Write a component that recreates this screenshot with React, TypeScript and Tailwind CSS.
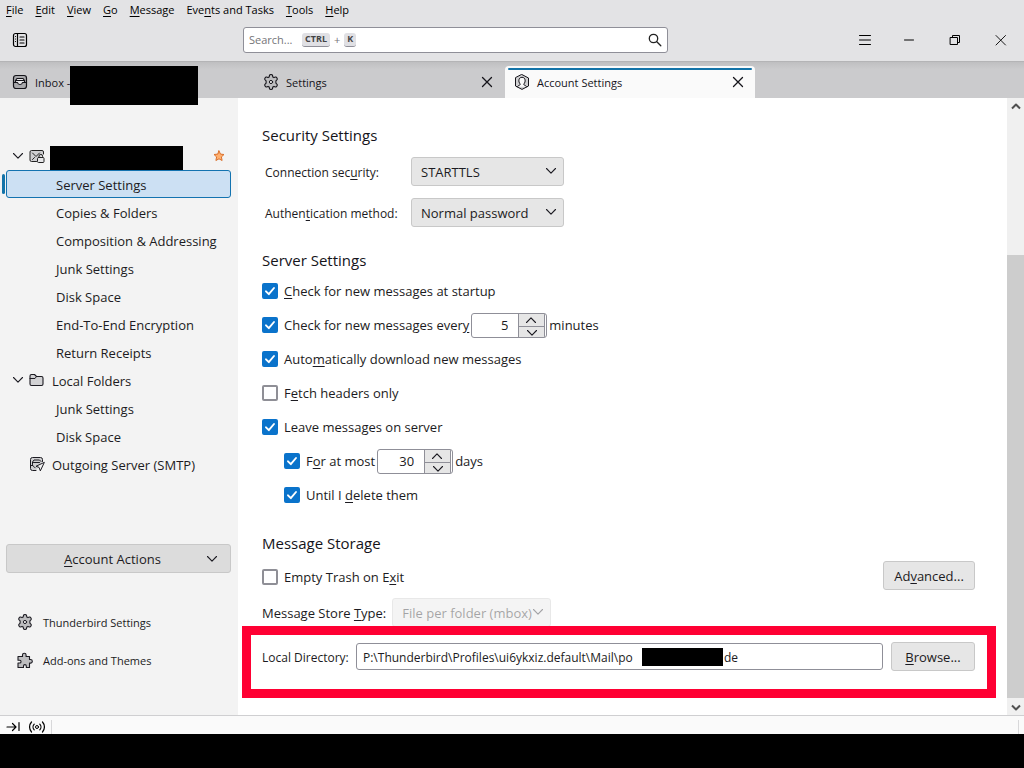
import { useState } from 'react';

// Text with one underlined access-key letter.
function Accel({ text, at }: { text: string; at: number }) {
  return (
    <span className="whitespace-pre">
      {text.slice(0, at)}
      <u className="underline-offset-2">{text[at]}</u>
      {text.slice(at + 1)}
    </span>
  );
}

function Icon({
  children,
  className = 'h-4 w-4',
  box = '0 0 16 16',
}: {
  children: React.ReactNode;
  className?: string;
  box?: string;
}) {
  return (
    <svg
      viewBox={box}
      className={`shrink-0 ${className}`}
      fill="none"
      stroke="currentColor"
      strokeLinecap="round"
      strokeLinejoin="round"
      aria-hidden="true"
    >
      {children}
    </svg>
  );
}

function ChevronDown({ className = 'h-3 w-3' }: { className?: string }) {
  return (
    <Icon box="0 0 12 12" className={className}>
      <path d="M1.5 3.5 6 8.2l4.5-4.7" strokeWidth="1.1" />
    </Icon>
  );
}

function CloseIcon() {
  return (
    <Icon>
      <path d="m3.5 3.5 9 9m0-9-9 9" strokeWidth="1.3" />
    </Icon>
  );
}

function GearIcon() {
  return (
    <Icon>
      <path
        d="M6.5 1.3c.2-1 2.8-1 3 0l.3 1.6 1.2.7 1.6-.5c.9-.3 2.200 1.900 1.500 2.600L12.900 6.800v2.400l1.200 1.100c.7.700-.600 2.900-1.500 2.600l-1.600-.5-1.200.7-.3 1.600c-.2 1-2.800 1-3 0l-.3-1.600-1.200-.7-1.600.5c-.9.3-2.200-1.900-1.500-2.600l1.200-1.100V6.800L1.900 5.700C1.200 5 2.500 2.800 3.400 3.100l1.600.5 1.200-.7z"
        fill="#bdbdbf"
        strokeWidth="1.1"
      />
      <circle cx="8" cy="8" r="1.6" fill="#f3f3f3" />
    </Icon>
  );
}

function PuzzleIcon() {
  return (
    <Icon>
      <path
        d="M5.500 4.500V3a1.800 1.800 0 0 1 3.600 0v1.500h3.400v3h1a1.800 1.800 0 0 1 0 3.600h-1v4.400H9.300V14a1.400 1.400 0 0 0-2.800 0v1.500H1V11h1.700a1.300 1.300 0 0 0 0-2.700H1V4.500z"
        fill="#bdbdbf"
        strokeWidth="1.1"
      />
    </Icon>
  );
}

function InboxIcon() {
  return (
    <Icon>
      <rect x="1.5" y="1.5" width="13" height="13" rx="2.5" fill="#a9a9ac" strokeWidth="1.2" />
      <path d="M3.500 8.500v-2l1.500-2h6l1.500 2v2h-2c-.3 1.600-1 2-2.500 2s-2.200-.4-2.500-2zM4.500 6.500h7" fill="#e8e8ea" strokeWidth="1.2" />
      <path d="M1.500 8.500h2M12.500 8.500h2" strokeWidth="1.2" />
    </Icon>
  );
}

function AccountIcon() {
  return (
    <Icon>
      <path d="M8 .6 14.500 4v8L8 15.400 1.500 12V4z" fill="#d0d0d2" />
      <path
        d="M3.500 12.800c.4-1 1.200-1.500 2.300-1.800.6-.2.5-.8.2-1.200C4.300 8 4.200 3.300 8 3.300s3.700 4.700 2 6.500c-.3.400-.4 1 .2 1.200 1.100.3 1.900.8 2.300 1.800"
        fill="#fafafa"
      />
    </Icon>
  );
}

function SecureMailIcon() {
  return (
    <Icon>
      <path d="M7.500 13.500h-5a1.500 1.500 0 0 1-1.500-1.500V4a1.500 1.500 0 0 1 1.500-1.500h10.500A1.500 1.500 0 0 1 14.500 4v2" fill="#cfcfd1" />
      <path d="m3.500 5 3.500 3.500L10.500 5M3.500 11.500l2-2" />
      <rect x="8.500" y="9.500" width="6.500" height="5" rx="1" fill="#e6e6e8" />
      <path d="M10 9.500V8.200a1.800 1.800 0 0 1 3.600 0v1.300" />
    </Icon>
  );
}

function FolderIcon() {
  return (
    <Icon>
      <path
        d="M1 4c0-1 .5-1.500 1.500-1.500h3L7.500 4.500h5c1 0 1.500.5 1.500 1.500v6c0 1-.5 1.500-1.500 1.500h-10C1.500 13.500 1 13 1 12z"
        fill="#d2d2d4"
        strokeWidth="1.1"
      />
      <path d="M1 6.500h5l1.500-2" />
    </Icon>
  );
}

function OutgoingIcon() {
  return (
    <Icon>
      <path d="M7 14.500H3.500a2 2 0 0 1-2-2v-9a2 2 0 0 1 2-2h8a2 2 0 0 1 2 2v2" fill="#cfcfd1" />
      <path d="M3.500 8.500V6L5 4h5.500L12 5.500M4.500 6.500h6M1.500 9.500h2.500c.3 1 .8 1.700 2 2" />
      <path d="m15 6.500-8 3.800 3 1 1.200 3.200z" fill="#f3f3f3" />
    </Icon>
  );
}

function TitleBar() {
  const menus = [
    { text: 'File', at: 0 },
    { text: 'Edit', at: 0 },
    { text: 'View', at: 0 },
    { text: 'Go', at: 0 },
    { text: 'Message', at: 0 },
    { text: 'Events and Tasks', at: 3 },
    { text: 'Tools', at: 0 },
    { text: 'Help', at: 0 },
  ];
  return (
    <header className="bg-[#e3e3e5] text-[11px] text-black">
      <nav className="flex h-5 items-center gap-3 pl-1.5">
        {menus.map((menu) => (
          <button key={menu.text} type="button">
            <Accel {...menu} />
          </button>
        ))}
      </nav>
      <div className="flex h-[41px] items-center pb-0.5">
        <button type="button" aria-label="Spaces toolbar" className="ml-3">
          <Icon>
            <rect x="1.5" y="1.5" width="13" height="13" rx="2" strokeWidth="1.2" />
            <path d="M5.500 1.500v13M8 5h4M8 8h4M8 11h4" strokeWidth="1.2" />
            <path d="M3.500 4.500v.1M3.500 7v.1M3.500 9.500v.1" />
          </Icon>
        </button>
        <label className="ml-[215px] flex h-[26px] max-w-[425px] flex-1 items-center rounded-[3px] border border-[#8f8f98] bg-white pr-1 pl-[5px] text-[#757578]">
          <input
            type="text"
            placeholder="Search..."
            aria-label="Search"
            className="w-[53px] outline-none placeholder:text-[#757578]"
          />
          <kbd className="flex h-[14px] items-center rounded-[3px] border-b border-[#8f8f98] bg-[#e0e0e4] px-[3px] font-[inherit] text-[9px] font-bold text-[#444]">
            CTRL
          </kbd>
          <span className="px-1">+</span>
          <kbd className="flex h-[14px] items-center rounded-[3px] border-b border-[#8f8f98] bg-[#e0e0e4] px-[3px] font-[inherit] text-[9px] font-bold text-[#444]">
            K
          </kbd>
          <span className="ml-auto text-[#222]">
            <Icon>
              <circle cx="6.5" cy="6.5" r="4.2" strokeWidth="1.3" />
              <path d="m9.800 9.800 4 4" strokeWidth="1.3" />
            </Icon>
          </span>
        </label>
        <div className="ml-auto flex h-full">
          <button type="button" aria-label="Application menu" className="grid w-[42px] place-items-center">
            <Icon>
              <path d="M2.500 3.500h11M2.500 8h11M2.500 12.500h11" />
            </Icon>
          </button>
          <button type="button" aria-label="Minimize" className="grid w-[46px] place-items-center">
            <Icon>
              <path d="M3.500 8h9" />
            </Icon>
          </button>
          <button type="button" aria-label="Restore" className="grid w-[46px] place-items-center">
            <Icon>
              <path d="M3.500 5.500h7v7h-7zM5.500 5.500v-2h7v7h-2" strokeLinejoin="miter" />
            </Icon>
          </button>
          <button type="button" aria-label="Close window" className="grid w-[46px] place-items-center">
            <Icon>
              <path d="m3 3.500 9.500 9.500m0-9.500-9.500 9.500" strokeWidth=".9" />
            </Icon>
          </button>
        </div>
      </div>
    </header>
  );
}

function TabStrip() {
  return (
    <div
      role="tablist"
      className="flex h-[37px] items-end border-t border-[#b4b4b6] bg-linear-to-b from-[#bfbfc1] via-[#cbcbcd] via-20% to-[#cbcbcd] pl-[3px] text-[11px] text-[#15141a]"
    >
      <div role="tab" className="relative flex h-8 w-[251px] items-center gap-[7px] pr-2.5 pl-[9px]">
        <InboxIcon />
        <span className="pt-0.5">Inbox -</span>
        <span className="absolute top-0 left-[67px] z-10 h-[39px] w-32 bg-black" />
      </div>
      <div role="tab" className="flex h-8 w-[251px] items-center gap-[7px] pr-2.5 pl-[9px]">
        <GearIcon />
        <span className="pt-0.5">Settings</span>
        <button type="button" aria-label="Close Settings" className="ml-auto">
          <CloseIcon />
        </button>
      </div>
      <div
        role="tab"
        aria-selected="true"
        className="flex h-8 w-[250px] flex-col rounded-t bg-[#fafafa] px-[3px]"
      >
        <div className="mt-0.5 h-0.5 rounded-full bg-[#1373a8]" />
        <div className="flex flex-1 items-center gap-[7px] px-1.5 pb-1">
          <AccountIcon />
          <span className="pt-0.5">Account Settings</span>
          <button type="button" aria-label="Close Account Settings" className="ml-auto">
            <CloseIcon />
          </button>
        </div>
      </div>
    </div>
  );
}

function SubItem({ label, selected = false }: { label: string; selected?: boolean }) {
  return (
    <li className="relative">
      {selected && (
        <span className="absolute top-1 left-0.5 h-5 w-[3px] rounded-sm bg-[#1373a8]" />
      )}
      <a
        href="#"
        className={`ml-1.5 mr-[7px] flex h-7 items-center rounded-[3px] border pt-0.5 pl-[49px] whitespace-nowrap ${
          selected ? 'border-[#1373b0] bg-[#cce0f3]' : 'border-transparent'
        }`}
      >
        {label}
      </a>
    </li>
  );
}

function Sidebar() {
  return (
    <aside className="flex w-[238px] shrink-0 flex-col bg-[#f3f3f3] pt-11">
      <ul>
        <li className="flex h-7 items-center pl-3">
          <ChevronDown />
          <span className="ml-[5px] text-[#222]">
            <SecureMailIcon />
          </span>
          <span className="ml-[5px] h-6 w-[133px] self-end bg-black" />
          <Icon box="0 0 12 12" className="ml-[30px] h-3 w-3 text-[#d9702c]">
            <path
              d="m6 .9 1.500 3.200 3.500.4-2.600 2.400.7 3.600L6 8.800l-3.100 1.700.7-3.600L1 4.500l3.500-.4z"
              fill="#ffb070"
            />
          </Icon>
        </li>
        <SubItem label="Server Settings" selected />
        <SubItem label="Copies & Folders" />
        <SubItem label="Composition & Addressing" />
        <SubItem label="Junk Settings" />
        <SubItem label="Disk Space" />
        <SubItem label="End-To-End Encryption" />
        <SubItem label="Return Receipts" />
        <li className="flex h-7 items-center pl-3">
          <ChevronDown />
          <a href="#" className="ml-[5px] flex items-center gap-[7px]">
            <FolderIcon />
            <span className="pt-0.5">Local Folders</span>
          </a>
        </li>
        <SubItem label="Junk Settings" />
        <SubItem label="Disk Space" />
        <li className="flex h-7 items-center pl-[29px]">
          <a href="#" className="flex items-center gap-[7px] whitespace-nowrap">
            <OutgoingIcon />
            <span className="pt-0.5">Outgoing Server (SMTP)</span>
          </a>
        </li>
      </ul>
      <div className="mt-auto pb-9">
        <button
          type="button"
          className="mb-[30px] ml-1.5 flex h-[29px] w-[225px] items-center rounded-[3px] border border-[#c8c8c8] bg-[#dcdcdc] px-3"
        >
          <span className="flex-1">
            <Accel text="Account Actions" at={0} />
          </span>
          <ChevronDown />
        </button>
        <a href="#" className="flex h-[38px] items-center gap-2.5 pl-[17px] text-[11px]">
          <GearIcon />
          <span className="pt-0.5">Thunderbird Settings</span>
        </a>
        <a href="#" className="flex h-[38px] items-center gap-2.5 pl-[17px] text-[11px]">
          <PuzzleIcon />
          <span className="pt-0.5">Add-ons and Themes</span>
        </a>
      </div>
    </aside>
  );
}

function Check({
  id,
  text,
  at,
  defaultChecked = false,
}: {
  id: string;
  text: string;
  at: number;
  defaultChecked?: boolean;
}) {
  return (
    <div className="flex items-center gap-1.5">
      <span className="relative h-4 w-4">
        <input
          id={id}
          type="checkbox"
          defaultChecked={defaultChecked}
          className="peer block h-4 w-4 appearance-none rounded-xs border-2 border-[#8f8f96] bg-white checked:border-[#0a73cb] checked:bg-[#0a73cb]"
        />
        <span className="pointer-events-none absolute inset-0 hidden text-white peer-checked:block">
          <Icon>
            <path d="m4 8.300 2.800 2.900L12 5" strokeWidth="1.9" />
          </Icon>
        </span>
      </span>
      <label htmlFor={id}>
        <Accel text={text} at={at} />
      </label>
    </div>
  );
}

function Picker({
  id,
  value,
  disabled = false,
  className,
}: {
  id: string;
  value: string;
  disabled?: boolean;
  className: string;
}) {
  return (
    <span className={`relative ${className} ${disabled ? 'opacity-40' : ''}`}>
      <select
        id={id}
        disabled={disabled}
        className="block h-[29px] w-full appearance-none rounded-[3px] border border-[#c8c8c8] bg-[#e6e6e6] pr-4 pl-[9px]"
      >
        <option>{value}</option>
      </select>
      <span className="pointer-events-none absolute top-2 right-[7px]">
        <ChevronDown />
      </span>
    </span>
  );
}

function NumberBox({ label, initial }: { label: string; initial: number }) {
  const [value, setValue] = useState(initial);
  return (
    <span className="flex h-[25px] w-[76px] overflow-hidden rounded-[3px] border border-[#8f8f98] bg-white">
      <input
        type="text"
        inputMode="numeric"
        aria-label={label}
        value={value}
        onChange={(event) => setValue(Number(event.target.value) || 0)}
        className="w-[46px] pr-2.5 text-right outline-none"
      />
      <span className="mr-px flex flex-1 flex-col border-x border-[#8f8f98] bg-[#e6e6e6]">
        <button
          type="button"
          aria-label="Increase"
          onClick={() => setValue(value + 1)}
          className="grid flex-1 rotate-180 place-items-center"
        >
          <ChevronDown />
        </button>
        <button
          type="button"
          aria-label="Decrease"
          onClick={() => setValue(Math.max(1, value - 1))}
          className="grid flex-1 place-items-center border-t border-[#8f8f98]"
        >
          <ChevronDown />
        </button>
      </span>
    </span>
  );
}

function ServerPanel() {
  const heading = 'h-6 pl-5 text-[15px] leading-6 font-medium text-[#15141a]';
  const push = 'h-[29px] shrink-0 rounded-[3px] border border-[#c8c8c8] bg-[#e6e6e6] text-center';
  return (
    <main className="min-w-0 flex-1 bg-white pt-[25px] pr-[11px] pl-1">
      <h2 className={heading}>Security Settings</h2>
      <div className="mt-2.5 grid grid-cols-[146px_153px] items-center gap-y-3 pl-[23px]">
        <label htmlFor="security" className="pt-0.5 text-xs">
          <Accel text="Connection security:" at={14} />
        </label>
        <Picker id="security" value="STARTTLS" className="w-full" />
        <label htmlFor="auth" className="pt-0.5 text-xs">
          <Accel text="Authentication method:" at={6} />
        </label>
        <Picker id="auth" value="Normal password" className="w-full" />
      </div>

      <h2 className={`mt-[21px] ${heading}`}>Server Settings</h2>
      <div className="mt-0.5 grid auto-rows-[34px] items-center pl-5">
        <Check id="startup" text="Check for new messages at startup" at={0} defaultChecked />
        <div className="flex items-center gap-0.5">
          <Check id="every" text="Check for new messages every" at={27} defaultChecked />
          <NumberBox label="Minutes between checks" initial={5} />
          <span>minutes</span>
        </div>
        <Check id="download" text="Automatically download new messages" at={4} defaultChecked />
        <Check id="headers" text="Fetch headers only" at={1} />
        <Check id="leave" text="Leave messages on server" at={11} defaultChecked />
        <div className="flex items-center gap-0.5 pl-[22px]">
          <Check id="most" text="For at most" at={1} defaultChecked />
          <NumberBox label="Days to keep messages" initial={30} />
          <span>days</span>
        </div>
        <div className="pl-[22px]">
          <Check id="until" text="Until I delete them" at={8} defaultChecked />
        </div>
      </div>

      <h2 className={`mt-[19px] ${heading}`}>Message Storage</h2>
      <div className="mt-1.5 flex h-8 justify-between pr-[21px] pl-5">
        <Check id="trash" text="Empty Trash on Exit" at={16} />
        <button type="button" className={`w-[92px] ${push}`}>
          <Accel text="Advanced..." at={2} />
        </button>
      </div>
      <div className="mt-[5px] flex items-center gap-1.5 pl-5">
        <label htmlFor="store">
          <Accel text="Message Store Type:" at={14} />
        </label>
        <Picker id="store" value="File per folder (mbox)" disabled className="w-[159px]" />
      </div>

      {/* Highlighted row: where the mail profile is kept on disk. */}
      <div className="relative -mt-px flex items-center border-[9px] border-[#ff0033] bg-white pt-[7px] pr-3 pb-[18px] pl-[11px]">
        <label htmlFor="directory" className="w-[94px] shrink-0 pt-0.5 text-xs">
          Local Directory:
        </label>
        <div className="flex h-[27px] min-w-0 flex-1 items-center rounded-[3px] border border-[#8f8f98] pl-1.5 text-xs">
          <input
            id="directory"
            type="text"
            defaultValue="P:\Thunderbird\Profiles\ui6ykxiz.default\Mail\po"
            className="w-[278px] pt-0.5 outline-none"
          />
          <span className="mx-px h-[18px] w-[81px] shrink-0 bg-black" />
          <input
            type="text"
            aria-label="End of local directory"
            defaultValue="de"
            className="min-w-0 flex-1 pt-0.5 outline-none"
          />
        </div>
        <button type="button" className={`ml-2 w-[84px] ${push}`}>
          <Accel text="Browse..." at={0} />
        </button>
      </div>
    </main>
  );
}

function ScrollRail() {
  return (
    <div className="flex w-[17px] shrink-0 flex-col bg-[#f0f0f0] text-[#505050]">
      <button type="button" aria-label="Scroll up" className="grid h-[17px] place-items-center">
        <Icon box="0 0 12 12" className="h-3 w-3">
          <path d="M2 7.500 6 3.500l4 4" strokeWidth="2" strokeLinecap="butt" />
        </Icon>
      </button>
      <div className="flex flex-1 flex-col justify-end">
        <div className="h-[76%] bg-[#cdcdcd]" />
      </div>
      <button type="button" aria-label="Scroll down" className="grid h-[17px] place-items-center">
        <Icon box="0 0 12 12" className="h-3 w-3">
          <path d="m2 4.500 4 4 4-4" strokeWidth="2" strokeLinecap="butt" />
        </Icon>
      </button>
    </div>
  );
}

function StatusBar() {
  return (
    <footer className="border-b-[34px] border-black">
      <div className="flex h-[19px] items-center border-t border-[#cfcfd1] bg-[#fafafa] pt-1 pl-[5px] text-black">
        <Icon>
          <path d="M2 8h9M7.500 4.500 11 8l-3.500 3.500M14 3.500v8" strokeWidth="1.2" />
        </Icon>
        <span className="ml-2">
          <Icon>
            <circle cx="8" cy="8" r="1.5" />
            <path
              d="M5.200 5.200a4 4 0 0 0 0 5.600M10.800 5.200a4 4 0 0 1 0 5.600M2.500 3a7.500 7.500 0 0 0 0 10M13.500 3a7.500 7.500 0 0 1 0 10"
              strokeWidth="1.2"
            />
          </Icon>
        </span>
        <span className="ml-1.5 h-full border-l border-[#d8d8da]" />
        <span className="mr-[5px] ml-auto h-full border-l border-[#d8d8da]" />
      </div>
    </footer>
  );
}

export default function App() {
  return (
    <div className="flex min-h-screen flex-col bg-white font-['Open_Sans',sans-serif] text-[13px] leading-[18px] text-[#1c1b22]">
      <TitleBar />
      <TabStrip />
      <div className="flex flex-1">
        <Sidebar />
        <ServerPanel />
        <ScrollRail />
      </div>
      <StatusBar />
    </div>
  );
}
